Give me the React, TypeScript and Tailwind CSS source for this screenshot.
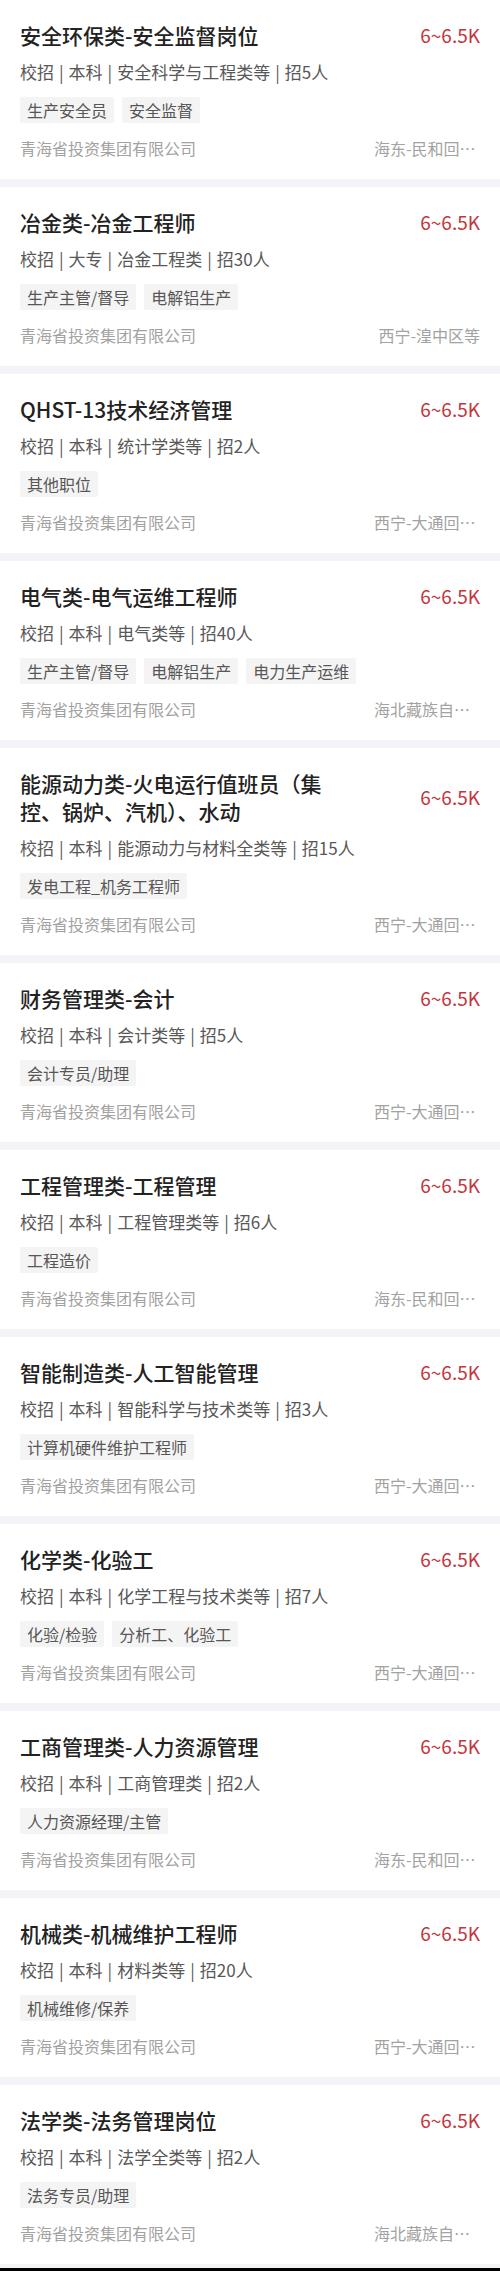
type Job = {
  title: string;
  edu: string;
  major: string;
  count: string;
  tags: string[];
  location: string;
};

const jobs: Job[] = [
  { title: '安全环保类-安全监督岗位', edu: '本科', major: '安全科学与工程类等', count: '招5人', tags: ['生产安全员', '安全监督'], location: '海东-民和回族土族自治县' },
  { title: '冶金类-冶金工程师', edu: '大专', major: '冶金工程类', count: '招30人', tags: ['生产主管/督导', '电解铝生产'], location: '西宁-湟中区等' },
  { title: 'QHST-13技术经济管理', edu: '本科', major: '统计学类等', count: '招2人', tags: ['其他职位'], location: '西宁-大通回族土族自治县' },
  { title: '电气类-电气运维工程师', edu: '本科', major: '电气类等', count: '招40人', tags: ['生产主管/督导', '电解铝生产', '电力生产运维'], location: '海北藏族自治州' },
  { title: '能源动力类-火电运行值班员（集控、锅炉、汽机）、水动', edu: '本科', major: '能源动力与材料全类等', count: '招15人', tags: ['发电工程_机务工程师'], location: '西宁-大通回族土族自治县' },
  { title: '财务管理类-会计', edu: '本科', major: '会计类等', count: '招5人', tags: ['会计专员/助理'], location: '西宁-大通回族土族自治县' },
  { title: '工程管理类-工程管理', edu: '本科', major: '工程管理类等', count: '招6人', tags: ['工程造价'], location: '海东-民和回族土族自治县' },
  { title: '智能制造类-人工智能管理', edu: '本科', major: '智能科学与技术类等', count: '招3人', tags: ['计算机硬件维护工程师'], location: '西宁-大通回族土族自治县' },
  { title: '化学类-化验工', edu: '本科', major: '化学工程与技术类等', count: '招7人', tags: ['化验/检验', '分析工、化验工'], location: '西宁-大通回族土族自治县' },
  { title: '工商管理类-人力资源管理', edu: '本科', major: '工商管理类', count: '招2人', tags: ['人力资源经理/主管'], location: '海东-民和回族土族自治县' },
  { title: '机械类-机械维护工程师', edu: '本科', major: '材料类等', count: '招20人', tags: ['机械维修/保养'], location: '西宁-大通回族土族自治县' },
  { title: '法学类-法务管理岗位', edu: '本科', major: '法学全类等', count: '招2人', tags: ['法务专员/助理'], location: '海北藏族自治州' },
];

const Sep = () => <span className="px-[5px]">|</span>;

const JobCard = ({ job }: { job: Job }) => {
  return (
    <div className="bg-white px-5 pt-[21px] pb-[19px]">
      {/* title + salary */}
      <div className="flex items-center justify-between">
        <h3 className="max-w-[312px] text-[21px] leading-[28px] font-medium text-[#222]">
          {job.title}
        </h3>
        <span className="shrink-0 text-[19px] leading-[28px] text-[#c5353c]">6~6.5K</span>
      </div>

      {/* requirements */}
      <div className="mt-[10px] text-[17px] leading-[26px] text-[#585858]">
        校招<Sep />{job.edu}<Sep />{job.major}<Sep />{job.count}
      </div>

      {/* tags */}
      <div className="mt-[12px] flex gap-2">
        {job.tags.map((t) => (
          <span key={t} className="h-[26px] rounded-[2px] bg-[#f4f4f4] px-[7px] text-[16px] leading-[26px] text-[#575757]">
            {t}
          </span>
        ))}
      </div>

      {/* company + location */}
      <div className="mt-[13px] flex items-center justify-between text-[16px] leading-[24px] text-[#a2a2a2]">
        <span>青海省投资集团有限公司</span>
        <span className="max-w-[106px] truncate">{job.location}</span>
      </div>
    </div>
  );
};

export default function App() {
  return (
    <div lang="zh-CN" className="w-[500px] bg-[#f3f4f7]" style={{ fontFamily: '"Noto Sans CJK SC", "Noto Sans", sans-serif' }}>
      {jobs.map((job, i) => (
        <div key={i}>
          <JobCard job={job} />
          {i < jobs.length - 1 && <div className="h-[8px] bg-[#f3f4f7]" />}
        </div>
      ))}
      <div className="h-[4px] bg-[#f3f4f7]" />
      <div className="h-[3px] bg-black" />
    </div>
  );
}
